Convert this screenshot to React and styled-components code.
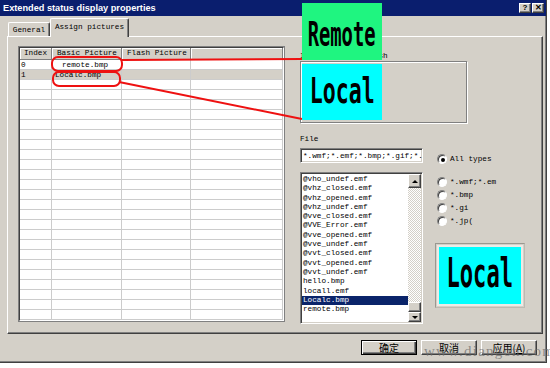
import React from 'react'
import styled, { createGlobalStyle, css } from 'styled-components'

const face = '#d4d0c8'
const mono = `"Liberation Mono", "DejaVu Sans Mono", monospace`

const GlobalStyle = createGlobalStyle`
    html, body {
        margin: 0;
        padding: 0;
        background: #fff;
    }
    body {
        width: 550px;
        height: 368px;
        overflow: hidden;
    }
`

const raised = css`
    border-style: solid;
    border-width: 1px;
    border-color: #fff #404040 #404040 #fff;
    box-shadow: inset -1px -1px 0 #808080;
`

const sunken = css`
    border-style: solid;
    border-width: 1px;
    border-color: #808080 #fff #fff #808080;
    box-shadow: inset 1px 1px 0 #404040, inset -1px -1px 0 ${face};
`

const Screen = styled.div`
    position: relative;
    width: 550px;
    height: 368px;
`

const Dialog = styled.div`
    box-sizing: border-box;
    width: 547px;
    height: 363px;
    background: ${face};
    border-right: 1px solid #404040;
    border-bottom: 1px solid #404040;
    box-shadow: inset -1px -1px 0 #808080;
    display: flex;
    flex-direction: column;
`

const TitleBar = styled.div`
    height: 16px;
    background: #0a1e6e;
    color: #fff;
    display: flex;
    align-items: center;
    justify-content: space-between;
    padding: 0 2px 0 3px;
    font: bold 9.2px "Liberation Sans", Arial, sans-serif;
`

const TitleButtons = styled.div`
    display: flex;
    gap: 1px;
`

const TitleButton = styled.div`
    box-sizing: border-box;
    width: 12px;
    height: 10px;
    background: ${face};
    ${raised};
    color: #000;
    font: bold 8px "Liberation Sans", Arial, sans-serif;
    display: flex;
    align-items: center;
    justify-content: center;
    line-height: 1;
`

const TabRow = styled.div`
    display: flex;
    align-items: flex-end;
    height: 20px;
    padding-left: 8px;
`

const Tab = styled.div`
    box-sizing: border-box;
    width: ${p => p.w}px;
    height: ${p => (p.active ? 19 : 14)}px;
    background: ${face};
    border: 1px solid;
    border-color: #fff #404040 transparent #fff;
    border-bottom: none;
    box-shadow: inset -1px 0 0 #808080;
    border-radius: 2px 2px 0 0;
    font: 7.7px ${mono};
    color: #000;
    display: flex;
    align-items: center;
    justify-content: center;
    ${p => p.active && css`
        position: relative;
        z-index: 1;
        margin-bottom: -1px;
        padding-bottom: 2px;
    `}
`

const TabPanel = styled.div`
    box-sizing: border-box;
    margin-left: 7px;
    width: 536px;
    height: 298px;
    border: 1px solid;
    border-color: #fff #404040 #404040 #fff;
    box-shadow: inset -1px -1px 0 #808080;
    display: flex;
    gap: 15px;
    padding: 9px 0 0 10px;
`

const Table = styled.div`
    box-sizing: border-box;
    width: 267px;
    height: 276px;
    background: #fff;
    border: 2px solid;
    border-color: #404040 #fff #fff #404040;
    outline: 1px solid #808080;
    outline-offset: -1px;
    overflow: hidden;
    font: 7.7px ${mono};
    color: #000;
`

const cols = '32px 70px 69px 1fr'

const HeaderRow = styled.div`
    display: grid;
    grid-template-columns: ${cols};
    height: 12px;
`

const HeaderCell = styled.div`
    box-sizing: border-box;
    background: ${face};
    border-right: 1px solid #808080;
    border-bottom: 1px solid #808080;
    box-shadow: inset 1px 1px 0 #fff;
    padding-left: ${p => p.pad || 4}px;
    line-height: 11px;
    white-space: nowrap;
    overflow: hidden;
`

const Row = styled.div`
    box-sizing: border-box;
    display: grid;
    grid-template-columns: ${cols};
    height: 10px;
    border-bottom: 1px solid #cccccc;
    background: ${p => (p.marked ? face : '#fff')};
`

const Cell = styled.div`
    border-right: 1px solid #cccccc;
    padding: 1px 0 0 ${p => p.indent || 1}px;
    line-height: 8px;
    white-space: nowrap;
    overflow: hidden;
`

const RightPane = styled.div`
    display: flex;
    flex-direction: column;
    padding-top: 5px;
    font: 7.7px ${mono};
    color: #000;
`

const GroupLabel = styled.div`
    line-height: 10px;
    height: 10px;
`

const GroupBox = styled.div`
    box-sizing: border-box;
    width: 167px;
    height: 62px;
    border: 1px solid #808080;
    box-shadow: inset 1px 1px 0 #fff, 1px 1px 0 #fff;
`

const FieldLabel = styled.div`
    margin-top: 12px;
    line-height: 9px;
`

const FieldRow = styled.div`
    display: flex;
    align-items: flex-start;
    margin-top: ${p => p.gap}px;
`

const TextInput = styled.div`
    box-sizing: border-box;
    width: 123px;
    height: 15px;
    background: #fff;
    ${sunken};
    padding: 2px 0 0 2px;
    line-height: 10px;
    white-space: nowrap;
    overflow: hidden;
`

const RadioList = styled.div`
    display: flex;
    flex-direction: column;
    margin-left: 14px;
    margin-top: ${p => p.top || 0}px;
`

const RadioRow = styled.div`
    display: flex;
    align-items: center;
    gap: 3px;
    height: ${p => p.h || 13}px;
    white-space: nowrap;
`

const RadioDot = styled.span`
    box-sizing: border-box;
    width: 10px;
    height: 10px;
    border-radius: 50%;
    background: #fff;
    border: 1px solid;
    border-color: #808080 #fff #fff #808080;
    box-shadow: inset 1px 1px 0 #404040;
    display: flex;
    align-items: center;
    justify-content: center;
    &::after {
        content: '';
        width: 4px;
        height: 4px;
        border-radius: 50%;
        background: ${p => (p.checked ? '#000' : 'transparent')};
        margin: 1px 0 0 1px;
    }
`

const ListBox = styled.div`
    box-sizing: border-box;
    width: 123px;
    height: 152px;
    background: #fff;
    ${sunken};
    padding: 1px;
    display: flex;
`

const Items = styled.div`
    flex: 1;
    padding-top: 1px;
    overflow: hidden;
`

const Item = styled.div`
    line-height: 9.3px;
    height: 9.3px;
    padding-left: 1px;
    white-space: nowrap;
    background: ${p => (p.selected ? '#0a246a' : 'transparent')};
    color: ${p => (p.selected ? '#fff' : '#000')};
`

const ScrollBar = styled.div`
    width: 13px;
    display: flex;
    flex-direction: column;
    background-color: #ecebe6;
    background-image: repeating-conic-gradient(#fff 0 25%, ${face} 0 50%);
    background-size: 2px 2px;
`

const ScrollButton = styled.div`
    box-sizing: border-box;
    height: ${p => p.h || 13}px;
    background: ${face};
    ${raised};
    display: flex;
    align-items: center;
    justify-content: center;
`

const Track = styled.div`
    flex: 1;
    display: flex;
    flex-direction: column;
    justify-content: flex-end;
`

const Arrow = styled.span`
    width: 0;
    height: 0;
    border-left: 3px solid transparent;
    border-right: 3px solid transparent;
    ${p => (p.down ? 'border-top: 3px solid #000;' : 'border-bottom: 3px solid #000;')}
`

const SideColumn = styled.div`
    display: flex;
    flex-direction: column;
`

const Preview = styled.div`
    box-sizing: border-box;
    margin: 16px 0 0 12px;
    width: 90px;
    height: 65px;
    border: 1px solid #9a9890;
    border-right-color: #bdbab2;
    border-bottom-color: #bdbab2;
    padding: 1px;
    display: flex;
`

const PreviewInner = styled.div`
    flex: 1;
    border: 2px solid #eceae6;
    background: #00ffff;
    display: flex;
    align-items: center;
    justify-content: center;
    overflow: hidden;
`

const ButtonRow = styled.div`
    display: flex;
    justify-content: flex-end;
    gap: 4px;
    margin-top: 6px;
    padding-right: 9px;
`

const Button = styled.div`
    box-sizing: border-box;
    width: 56px;
    height: 15px;
    background: ${face};
    ${raised};
    ${p => p.primary && css`
        border-color: #000;
        box-shadow: inset 1px 1px 0 #fff, inset -1px -1px 0 #404040, inset -2px -2px 0 #808080;
    `}
    font: 10px "Noto Sans CJK SC", "Liberation Sans", sans-serif;
    color: #000;
    display: flex;
    align-items: center;
    justify-content: center;
    line-height: 1;
`

const Overlay = styled.div`
    position: absolute;
    inset: 0;
    pointer-events: none;
`

const Picture = styled.div`
    position: absolute;
    left: ${p => p.x}px;
    top: ${p => p.y}px;
    width: ${p => p.w}px;
    height: ${p => p.h}px;
    background: ${p => p.bg};
    display: flex;
    align-items: center;
    justify-content: center;
    overflow: hidden;
`

const BigWord = styled.span`
    font: bold ${p => p.size}px "DejaVu Sans Mono", monospace;
    line-height: 1;
    color: #000;
    transform: translateY(${p => p.dy || 0}px) scaleX(${p => p.sx});
    white-space: nowrap;
`

const Marks = styled.svg`
    position: absolute;
    left: 0;
    top: 0;
`

const Watermark = styled.div`
    position: absolute;
    left: 424px;
    top: 343px;
    font: 15px "Liberation Serif", "Times New Roman", serif;
    letter-spacing: 1.2px;
    color: rgba(105, 105, 105, 0.7);
`

const files = [
    '@vho_undef.emf', '@vhz_closed.emf', '@vhz_opened.emf', '@vhz_undef.emf',
    '@vve_closed.emf', '@VVE_Error.emf', '@vve_opened.emf', '@vve_undef.emf',
    '@vvt_closed.emf', '@vvt_opened.emf', '@vvt_undef.emf', 'hello.bmp',
    'locall.emf', 'Localc.bmp', 'remote.bmp',
]

const types = ['*.wmf;*.em', '*.bmp', '*.gi', '*.jp(']

const entries = [
    { index: '0', picture: 'remote.bmp', indent: 10 },
    { index: '1', picture: 'Localc.bmp', indent: 3, marked: true },
]

export default function App() {
    const blanks = Array.from({ length: 24 }, (_, i) => i)

    return (
        <Screen>
            <GlobalStyle />
            <Dialog>
                <TitleBar>
                    <span>Extended status display properties</span>
                    <TitleButtons>
                        <TitleButton>?</TitleButton>
                        <TitleButton>✕</TitleButton>
                    </TitleButtons>
                </TitleBar>
                <TabRow>
                    <Tab w={42}>General</Tab>
                    <Tab w={79} active>Assign pictures</Tab>
                </TabRow>
                <TabPanel>
                    <Table>
                        <HeaderRow>
                            <HeaderCell pad={4}>Index</HeaderCell>
                            <HeaderCell pad={5}>Basic Picture</HeaderCell>
                            <HeaderCell pad={5}>Flash Picture</HeaderCell>
                            <HeaderCell />
                        </HeaderRow>
                        {entries.map(e => (
                            <Row key={e.index} marked={e.marked}>
                                <Cell>{e.index}</Cell>
                                <Cell indent={e.indent}>{e.picture}</Cell>
                                <Cell />
                                <Cell />
                            </Row>
                        ))}
                        {blanks.map(i => (
                            <Row key={i}>
                                <Cell />
                                <Cell />
                                <Cell />
                                <Cell />
                            </Row>
                        ))}
                    </Table>
                    <RightPane>
                        <GroupLabel>Image for the flash</GroupLabel>
                        <GroupBox />
                        <FieldLabel>File</FieldLabel>
                        <FieldRow gap={4}>
                            <TextInput>*.wmf;*.emf;*.bmp;*.gif;*.jpg</TextInput>
                            <RadioList top={6}>
                                <RadioRow h={10}>
                                    <RadioDot checked />
                                    <span>All types</span>
                                </RadioRow>
                            </RadioList>
                        </FieldRow>
                        <FieldRow gap={8}>
                            <ListBox>
                                <Items>
                                    {files.map(f => (
                                        <Item key={f} selected={f === 'Localc.bmp'}>{f}</Item>
                                    ))}
                                </Items>
                                <ScrollBar>
                                    <ScrollButton h={14}><Arrow /></ScrollButton>
                                    <Track>
                                        <ScrollButton h={10} />
                                    </Track>
                                    <ScrollButton h={10}><Arrow down /></ScrollButton>
                                </ScrollBar>
                            </ListBox>
                            <SideColumn>
                                <RadioList top={3}>
                                    {types.map(t => (
                                        <RadioRow key={t}>
                                            <RadioDot />
                                            <span>{t}</span>
                                        </RadioRow>
                                    ))}
                                </RadioList>
                                <Preview>
                                    <PreviewInner>
                                        <BigWord size={41} sx={0.54} dy={-2}>Local</BigWord>
                                    </PreviewInner>
                                </Preview>
                            </SideColumn>
                        </FieldRow>
                    </RightPane>
                </TabPanel>
                <ButtonRow>
                    <Button primary>确定</Button>
                    <Button>取消</Button>
                    <Button>应用(<u>A</u>)</Button>
                </ButtonRow>
            </Dialog>
            <Overlay>
                <Picture x={302} y={3} w={80} h={57} bg="#1ff580">
                    <BigWord size={33} sx={0.57} dy={3}>Remote</BigWord>
                </Picture>
                <Picture x={302} y={64} w={80} h={56} bg="#00ffff">
                    <BigWord size={36} sx={0.6} dy={-1}>Local</BigWord>
                </Picture>
                <Marks width="550" height="368">
                    <g fill="none" stroke="#ee1111" strokeWidth="2">
                        <rect x="52" y="57" width="70" height="14" rx="6" />
                        <rect x="53" y="72" width="67" height="14" rx="6" />
                        <line x1="122" y1="60" x2="302" y2="59" />
                        <line x1="119" y1="82" x2="302" y2="119" />
                    </g>
                </Marks>
                <Watermark>www.diangon.com</Watermark>
            </Overlay>
        </Screen>
    )
}
